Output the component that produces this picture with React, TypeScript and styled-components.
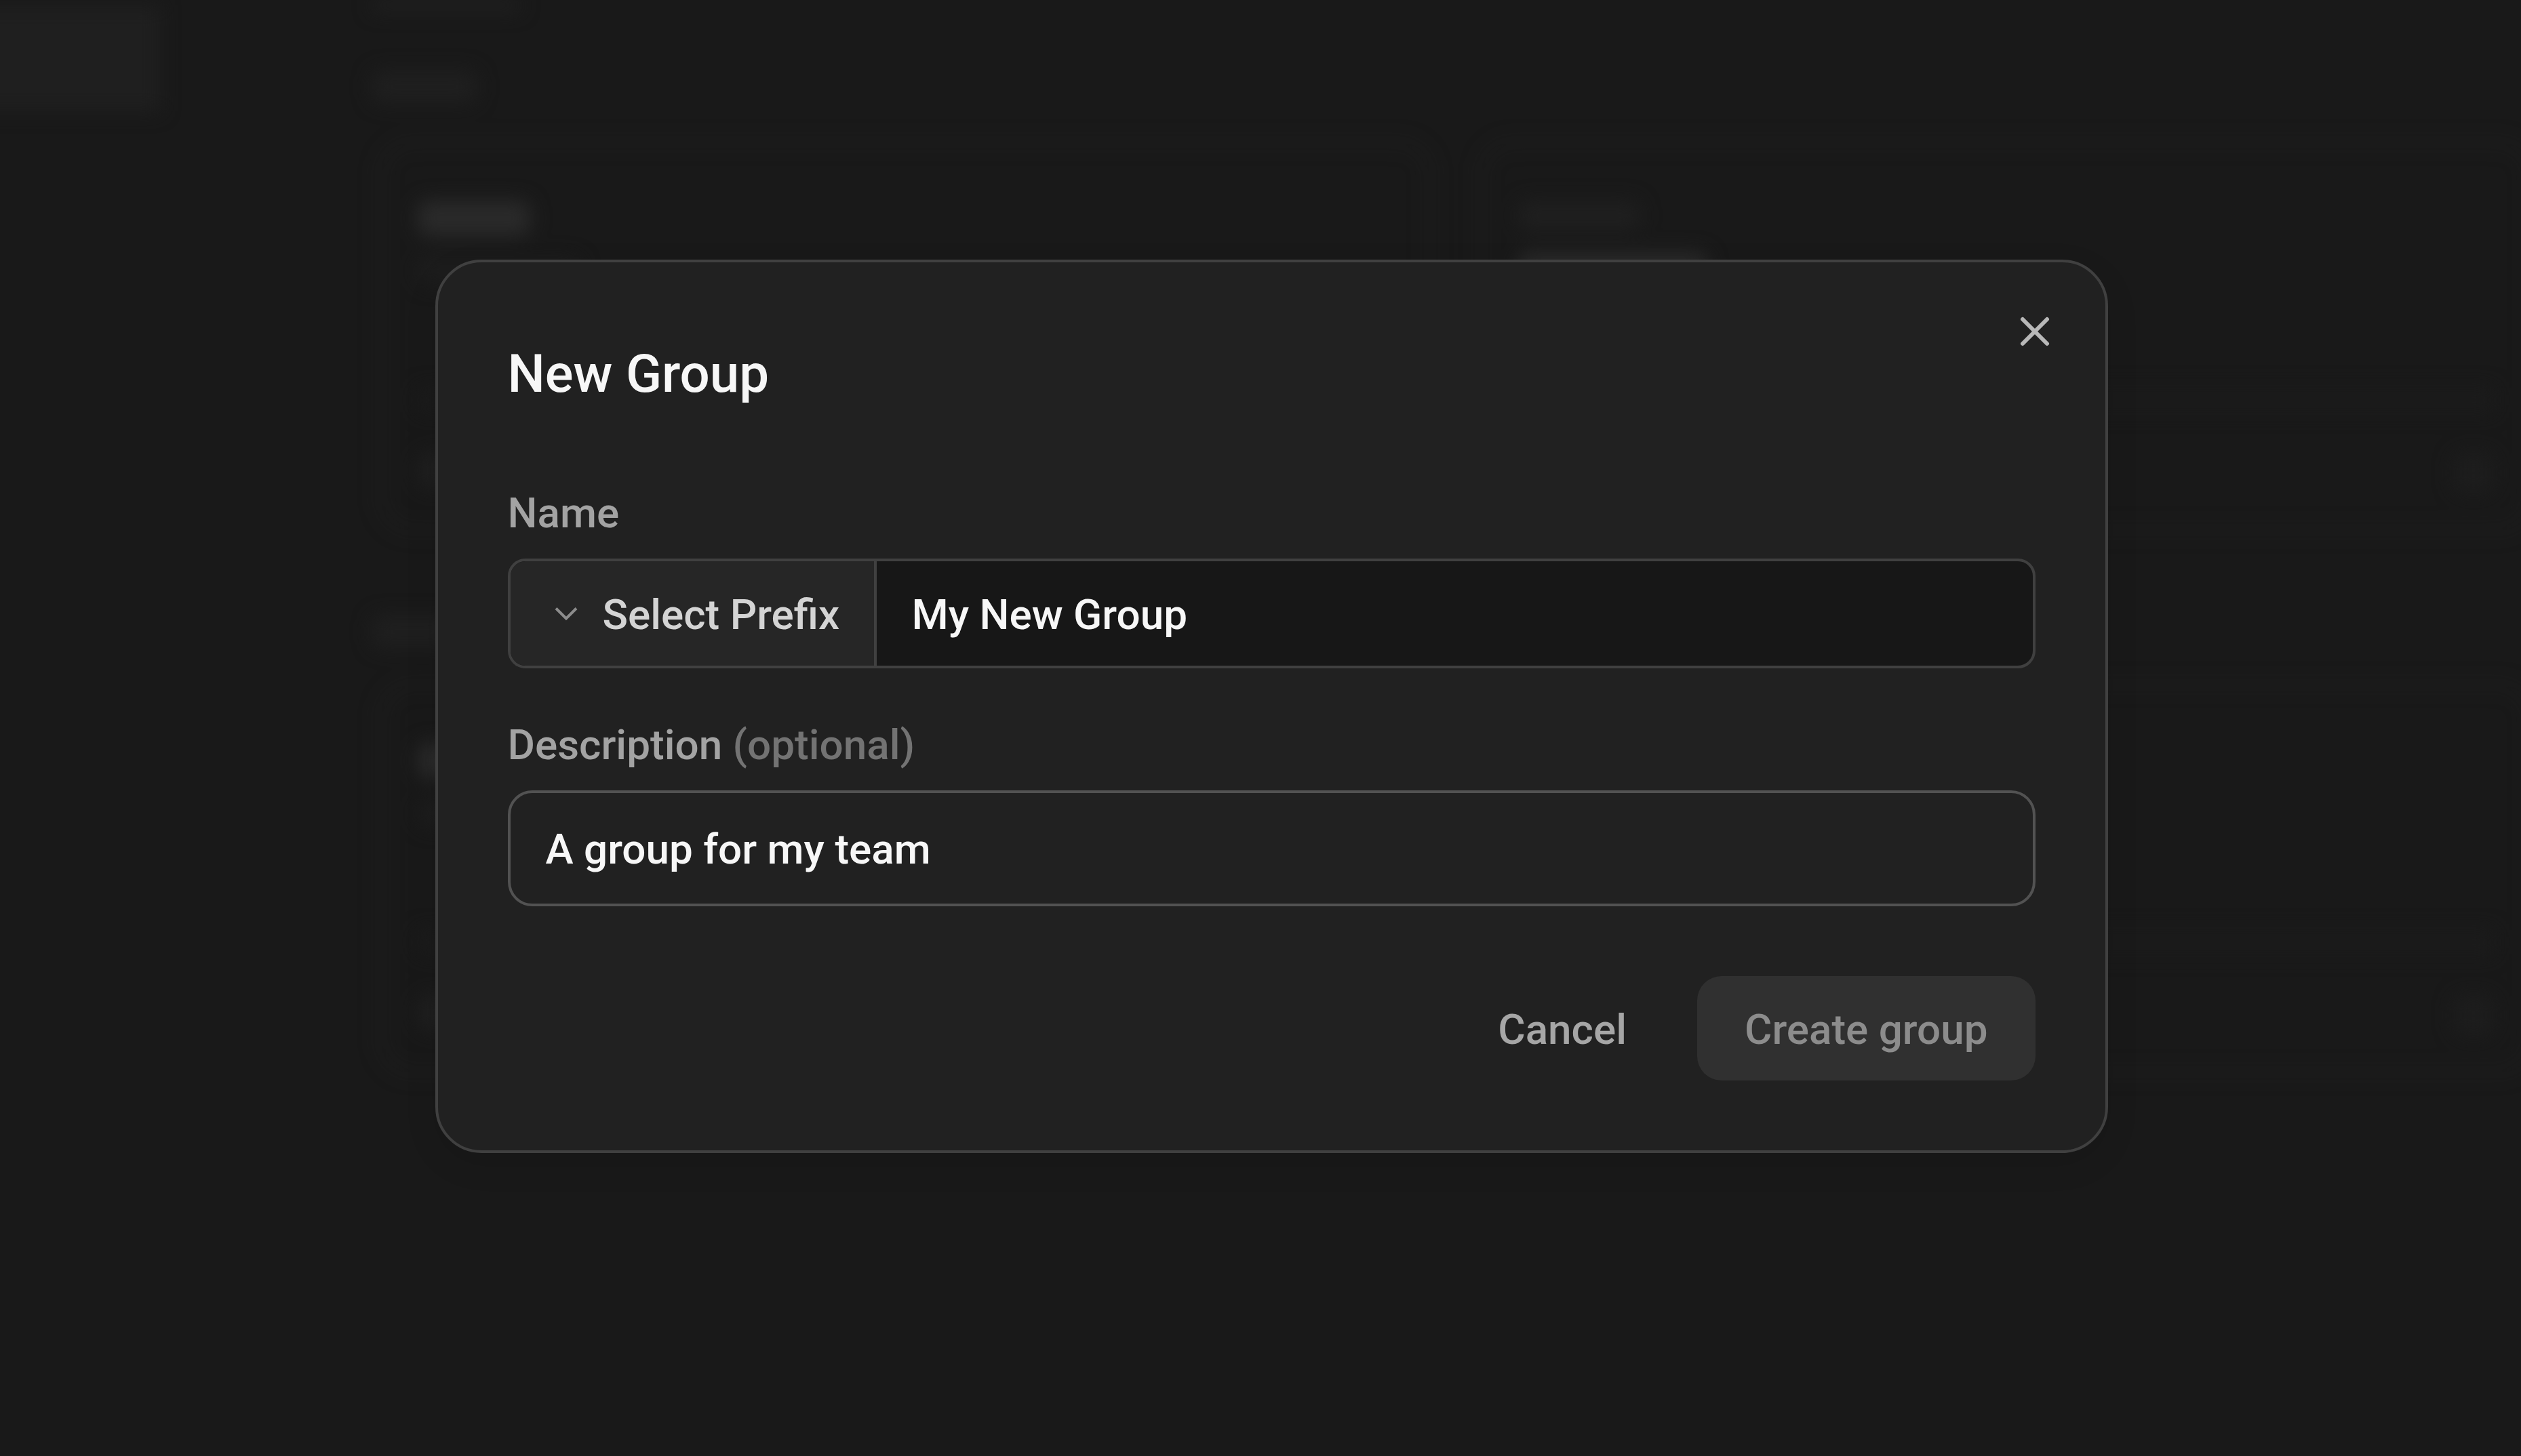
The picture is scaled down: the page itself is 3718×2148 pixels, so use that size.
import React, { useState } from "react";
import styled, { createGlobalStyle } from "styled-components";
import { ChevronDown, X } from "lucide-react";

const GlobalStyle = createGlobalStyle`
  *, *::before, *::after { box-sizing: border-box; }
  body {
    margin: 0;
    background: #191919;
    font-family: Roboto, "Liberation Sans", sans-serif;
    font-weight: 500;
  }
  button, input, select { font: inherit; margin: 0; }
`;

const Page = styled.div`
  display: grid;
  grid-template-columns: minmax(0, 1fr);
  min-height: 100vh;
  overflow: hidden;
`;

/* Dimmed, out-of-focus page behind the dialog */
const Backdrop = styled.div`
  grid-area: 1 / 1;
  display: grid;
  grid-template-columns: 236px minmax(0, 1fr);
  column-gap: 312px;
  height: 100vh;
  filter: blur(14px);
`;

const Ghost = styled.div<{ $w: number; $h: number; $tone: string }>`
  width: ${(p) => p.$w}px;
  height: ${(p) => p.$h}px;
  border-radius: 16px;
  background: ${(p) => p.$tone};
`;

const SideItem = styled.div`
  height: 156px;
  margin: 8px 0 0 -48px;
  background: #1f1f1f;
`;

const Sections = styled.div`
  display: flex;
  flex-direction: column;
`;

const SectionHead = styled.div<{ $space: number }>`
  display: flex;
  align-items: flex-start;
  height: ${(p) => p.$space}px;
`;

const CardRow = styled.div`
  display: grid;
  grid-template-columns: 1fr 1fr;
  gap: 72px;
  margin-left: 12px;
  margin-right: -16px;
`;

const GhostCard = styled.div`
  display: flex;
  flex-direction: column;
  gap: 32px;
  height: 576px;
  padding: 84px 52px 52px;
  border: 4px solid #252525;
  border-radius: 48px;
`;

const GhostFoot = styled.div`
  display: flex;
  flex-direction: column;
  gap: 60px;
  margin-top: auto;
`;

const GhostBar = styled.div`
  height: 36px;
  background: #1b1b1b;
`;

const GhostEnds = styled.div`
  display: flex;
  justify-content: space-between;
`;

const Overlay = styled.div`
  grid-area: 1 / 1;
  display: flex;
  align-items: center;
  justify-content: center;
  padding: 0 0 64px 32px;
  z-index: 1;
`;

const Dialog = styled.form`
  position: relative;
  width: 2467px;
  max-width: 100%;
  padding: 103px;
  background: #212121;
  border: 4px solid #404040;
  border-radius: 68px;
  box-shadow: 0 16px 48px rgba(0, 0, 0, 0.1);
`;

const Title = styled.h1`
  margin: 0 0 98px;
  color: #f7f7f7;
  font-size: 78px;
  font-weight: 500;
  line-height: 124px;
`;

const CloseButton = styled.button`
  position: absolute;
  top: 66px;
  right: 68px;
  display: flex;
  padding: 0;
  border: 0;
  background: none;
  color: #b8b8b8;
  cursor: pointer;
`;

const Field = styled.div`
  display: flex;
  flex-direction: column;
  gap: 22px;
  margin-bottom: 68px;
`;

const Label = styled.label`
  color: #a3a3a3;
  font-size: 62px;
  line-height: 90px;
`;

const Optional = styled.span`
  color: #737373;
`;

const NameBox = styled.div`
  display: flex;
  height: 162px;
  overflow: hidden;
  border: 4px solid #404040;
  border-radius: 26px;
  background: #171717;
`;

const Prefix = styled.div`
  display: flex;
  align-items: center;
  gap: 24px;
  padding: 0 50px 0 52px;
  border-right: 4px solid #404040;
  background: #262626;
  color: #8c8c8c;
`;

const PrefixSelect = styled.select`
  appearance: none;
  padding: 2px 0 0;
  border: 0;
  outline: 0;
  background: none;
  color: #d4d4d4;
  font-size: 62px;
`;

const NameInput = styled.input`
  flex: 1;
  min-width: 0;
  padding: 2px 52px 0;
  border: 0;
  outline: 0;
  background: none;
  color: #f7f7f7;
  font-size: 62px;
`;

const DescriptionInput = styled.input`
  width: 100%;
  height: 171px;
  padding: 2px 52px 0;
  border: 4px solid #525252;
  border-radius: 36px;
  outline: 0;
  background: none;
  color: #f7f7f7;
  font-size: 62px;
`;

const Actions = styled.div`
  display: flex;
  justify-content: flex-end;
  gap: 34px;
  margin-top: 103px;
`;

const ActionButton = styled.button<{ $filled?: boolean }>`
  height: 154px;
  padding: 2px 70px 0;
  border: 0;
  border-radius: 36px;
  background: ${(p) => (p.$filled ? "#303030" : "none")};
  color: ${(p) => (p.$filled ? "#8c8c8c" : "#a6a6a6")};
  font-size: 62px;
`;

const LastField = styled(Field)`
  margin-bottom: 0;
`;

function BackgroundCard({ badge, title }: { badge?: boolean; title: number }) {
  return (
    <GhostCard>
      {badge && <Ghost $w={180} $h={44} $tone="#1f1f1f" />}
      <Ghost $w={title} $h={52} $tone="#2a2a2a" />
      {!badge && <Ghost $w={240} $h={40} $tone="#1d1d1d" />}
      <GhostFoot>
        <GhostBar />
        <GhostEnds>
          <Ghost $w={52} $h={52} $tone="#1f1f1f" />
          <Ghost $w={60} $h={60} $tone="#1d1d1d" />
        </GhostEnds>
      </GhostFoot>
    </GhostCard>
  );
}

export default function App() {
  const [name, setName] = useState("My New Group");
  const [description, setDescription] = useState("A group for my team");

  return (
    <Page>
      <GlobalStyle />
      <Backdrop aria-hidden="true">
        <SideItem />
        <Sections>
          <SectionHead $space={104}>
            <Ghost $w={220} $h={16} $tone="#212121" />
          </SectionHead>
          <SectionHead $space={104}>
            <Ghost $w={156} $h={48} $tone="#1f1f1f" />
          </SectionHead>
          <CardRow>
            <BackgroundCard title={166} />
            <BackgroundCard badge title={280} />
          </CardRow>
          <SectionHead $space={124} />
          <SectionHead $space={100}>
            <Ghost $w={120} $h={48} $tone="#1f1f1f" />
          </SectionHead>
          <CardRow>
            <BackgroundCard title={200} />
            <BackgroundCard title={280} />
          </CardRow>
        </Sections>
      </Backdrop>

      <Overlay>
        <Dialog
          role="dialog"
          aria-labelledby="dialog-title"
          onSubmit={(e) => e.preventDefault()}
        >
          <Title id="dialog-title">New Group</Title>
          <CloseButton type="button" aria-label="Close">
            <X size={72} strokeWidth={2} />
          </CloseButton>

          <Field>
            <Label htmlFor="group-name">Name</Label>
            <NameBox>
              <Prefix>
                <ChevronDown
                  size={60}
                  strokeWidth={1.6}
                  strokeLinecap="butt"
                  strokeLinejoin="miter"
                />
                <PrefixSelect aria-label="Prefix">
                  <option>Select Prefix</option>
                </PrefixSelect>
              </Prefix>
              <NameInput
                id="group-name"
                type="text"
                value={name}
                onChange={(e) => setName(e.target.value)}
              />
            </NameBox>
          </Field>

          <LastField>
            <Label htmlFor="group-description">
              Description <Optional>(optional)</Optional>
            </Label>
            <DescriptionInput
              id="group-description"
              type="text"
              value={description}
              onChange={(e) => setDescription(e.target.value)}
            />
          </LastField>

          <Actions>
            <ActionButton type="button">Cancel</ActionButton>
            <ActionButton type="submit" $filled disabled>
              Create group
            </ActionButton>
          </Actions>
        </Dialog>
      </Overlay>
    </Page>
  );
}
